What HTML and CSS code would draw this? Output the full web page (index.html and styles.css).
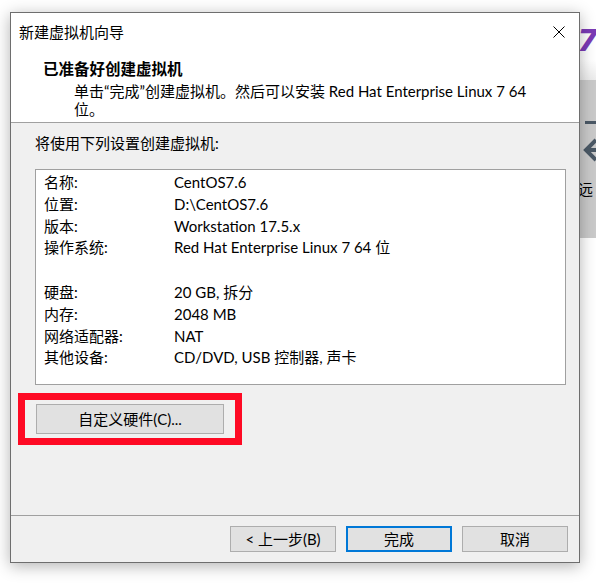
FILE: index.html
```html
<!DOCTYPE html>
<html lang="zh-CN">
<head>
    <meta charset="UTF-8">
    <title>新建虚拟机向导</title>
    <link rel="stylesheet" href="styles.css">
</head>
<body>
    <div class="dialog">
        <div class="titlebar">
            <span class="title">新建虚拟机向导</span>
            <svg class="close" width="12" height="12" viewBox="0 0 12 12">
                <path d="M0.5 0.5 L11.5 11.5 M11.5 0.5 L0.5 11.5" stroke="#000" stroke-width="1" fill="none"/>
            </svg>
        </div>

        <div class="header">
            <div class="heading">已准备好创建虚拟机</div>
            <div class="subtext">单击“完成”创建虚拟机。然后可以安装 Red Hat Enterprise Linux 7 64<br>位。</div>
        </div>

        <div class="content">
            <div class="intro">将使用下列设置创建虚拟机:</div>
            <div class="summary">
                <div class="row"><span>名称:</span><span>CentOS7.6</span></div>
                <div class="row"><span>位置:</span><span>D:\CentOS7.6</span></div>
                <div class="row"><span>版本:</span><span>Workstation 17.5.x</span></div>
                <div class="row"><span>操作系统:</span><span>Red Hat Enterprise Linux 7 64 位</span></div>
                <div class="row blank"></div>
                <div class="row"><span>硬盘:</span><span>20 GB, 拆分</span></div>
                <div class="row"><span>内存:</span><span>2048 MB</span></div>
                <div class="row"><span>网络适配器:</span><span>NAT</span></div>
                <div class="row"><span>其他设备:</span><span>CD/DVD, USB 控制器, 声卡</span></div>
            </div>
            <div class="custom-wrap">
                <button class="btn custom">自定义硬件(C)...</button>
                <span class="highlight"></span>
            </div>
        </div>

        <div class="footer">
            <button class="btn">&lt; 上一步(B)</button>
            <button class="btn primary">完成</button>
            <button class="btn">取消</button>
        </div>
    </div>

    <div class="backdrop">
        <div class="bg-top"><span class="seven">7</span></div>
        <div class="bg-panel">
            <div class="bar"></div>
            <svg class="arrow" width="16" height="24" viewBox="0 0 16 24">
                <path d="M13 2 L3 12 L13 22 M3 12 H20" stroke="#4b5966" stroke-width="4" fill="none"/>
            </svg>
            <div class="far">远</div>
        </div>
    </div>
</body>
</html>
```

FILE: styles.css
```css
html, body {
    margin: 0;
    padding: 0;
}
body {
    width: 596px;
    height: 584px;
    overflow: hidden;
    background: #ffffff;
    display: flex;
    align-items: flex-start;
    padding-left: 10px;
    box-sizing: border-box;
    font-family: Lato, "Noto Sans CJK SC", sans-serif;
    font-size: 15px;
    color: #000;
}
.dialog {
    position: relative;
    z-index: 1;
    flex: 0 0 570px;
    height: 551px;
    margin-top: 12px;
    box-sizing: border-box;
    border: 1px solid #6e6e6e;
    background: #f0f0f0;
    box-shadow: 0 3px 15px rgba(0,0,0,0.3);
    display: flex;
    flex-direction: column;
}
.titlebar {
    height: 38px;
    background: #fff;
    display: flex;
    align-items: center;
    justify-content: space-between;
    padding: 0 14px 0 8px;
}
.title {
    line-height: 20px;
}
.header {
    background: #fff;
    padding: 8px 0 4px 32px;
    border-bottom: 1px solid #a0a0a0;
}
.heading {
    font-weight: bold;
    font-size: 15.5px;
    line-height: 20px;
    margin-bottom: 3px;
}
.subtext {
    padding-left: 31px;
    line-height: 18px;
}
.content {
    flex: 1;
    padding-top: 10px;
}
.intro {
    padding-left: 24px;
    line-height: 20px;
}
.summary {
    margin: 16px 0 0 24px;
    width: 531px;
    height: 216px;
    box-sizing: border-box;
    border: 1px solid #a0a0a0;
    background: #fff;
    padding: 2px 0 0 8px;
}
.row {
    display: grid;
    grid-template-columns: 130px 1fr;
    height: 21.75px;
    line-height: 21.75px;
    white-space: nowrap;
}
.row.blank {
    height: 23px;
}
.custom-wrap {
    position: relative;
    width: 188px;
    height: 30px;
    margin: 19px 0 0 25px;
}
.btn {
    box-sizing: border-box;
    width: 106px;
    height: 26px;
    padding: 0;
    background: #e1e1e1;
    border: 1px solid #adadad;
    font-family: Lato, "Noto Sans CJK SC", sans-serif;
    font-size: 15px;
    color: #000;
    line-height: 22px;
}
.btn.custom {
    width: 188px;
    height: 30px;
}
.btn.primary {
    border: 2px solid #0078d7;
}
.highlight {
    position: absolute;
    top: -11px;
    left: -18px;
    right: -18px;
    bottom: -11px;
    border: 7px solid #fe0a24;
}
.footer {
    height: 47px;
    box-sizing: border-box;
    border-top: 1px solid #a0a0a0;
    padding: 10px 11px 0 0;
    display: flex;
    justify-content: flex-end;
    gap: 10px;
}
.backdrop {
    flex: 0 0 16px;
    height: 584px;
    overflow: hidden;
}
.bg-top {
    height: 80px;
    background: linear-gradient(#ffffff 0, #ffffff 60px, #ececec 80px);
}
.seven {
    display: block;
    padding-top: 22px;
    margin-left: -3px;
    font-family: "DejaVu Sans", sans-serif;
    font-weight: bold;
    font-style: italic;
    font-size: 31px;
    line-height: 36px;
    color: #7b3bb6;
}
.bg-panel {
    height: 158px;
    background: #cacaca;
    padding-top: 41px;
    box-sizing: border-box;
}
.bar {
    height: 3px;
    margin-left: 5px;
    background: #4b5966;
}
.arrow {
    display: block;
    margin: 14px 0 0 3px;
}
.far {
    margin: 18px 0 0 -2px;
    line-height: 18px;
    font-family: "Noto Sans CJK SC", sans-serif;
}
```
